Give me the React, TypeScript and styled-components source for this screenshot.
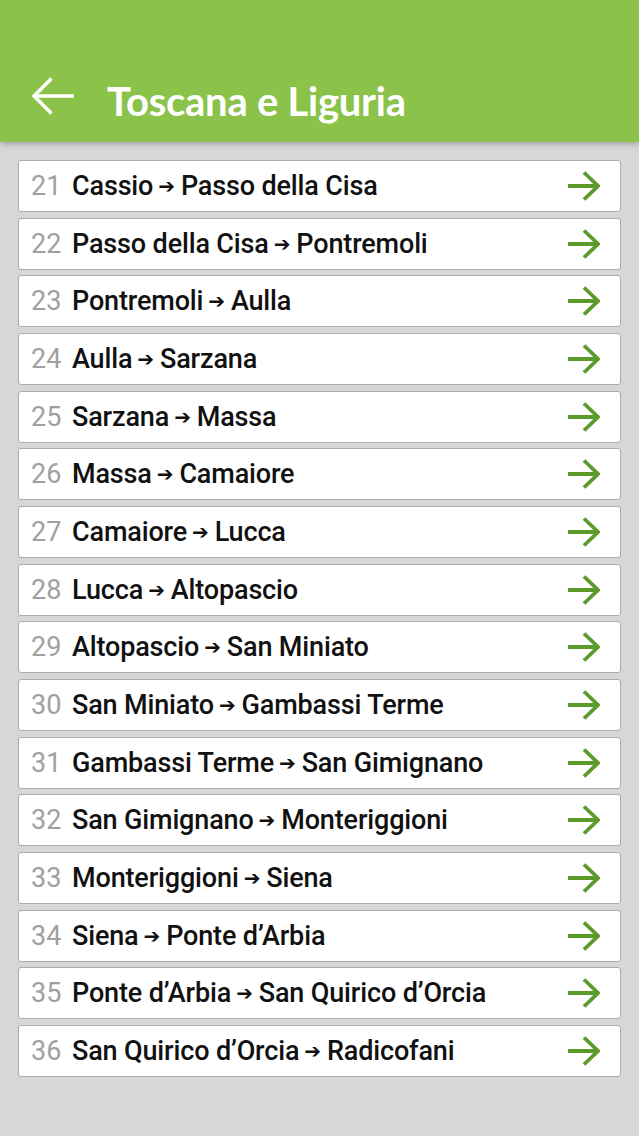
import React from "react";
import styled, { createGlobalStyle } from "styled-components";

const Global = createGlobalStyle`
  html, body { margin: 0; padding: 0; background: #d5d7d9; }
  body { font-family: Roboto, "Noto Sans", sans-serif; }
`;

const Page = styled.div`
  width: 639px;
  min-height: 1136px;
  background: #d5d7d9;
`;

const Header = styled.header`
  height: 142px;
  background: #8bc34a;
  display: flex;
  align-items: flex-end;
  padding: 0 0 21px 32px;
  box-sizing: border-box;
  gap: 32px;
  box-shadow: 0 2px 6px rgba(0, 0, 0, 0.25);
  position: relative;
  z-index: 1;
`;

const BackButton = styled.button`
  border: 0;
  background: transparent;
  padding: 0;
  width: 43px;
  height: 38px;
  margin-bottom: 6px;
  display: flex;
  cursor: pointer;
`;

const Title = styled.h1`
  margin: 0;
  color: #ffffff;
  font-family: Lato, "Open Sans", sans-serif;
  font-weight: 700;
  font-size: 40px;
  letter-spacing: -0.25px;
  line-height: 1;
`;

const List = styled.ul`
  list-style: none;
  margin: 0;
  padding: 18px 18px 0 18px;
  display: flex;
  flex-direction: column;
  gap: 5.67px;
`;

const Card = styled.li`
  height: 52px;
  box-sizing: border-box;
  background: #ffffff;
  border: 1px solid #a9abad;
  border-radius: 3px;
  display: flex;
  align-items: center;
  padding: 0 20px 0 12px;
`;

const Num = styled.span`
  color: #a0a0a0;
  font-size: 27px;
  width: 41px;
  flex: none;
`;

const Route = styled.span`
  flex: 1;
  color: #111111;
  font-size: 27px;
  font-weight: 500;
  letter-spacing: -0.15px;
  white-space: nowrap;
`;

const Sep = styled.span`
  font-family: "DejaVu Sans", sans-serif;
  font-weight: 700;
  font-size: 20px;
  margin: 0 6px 0 5px;
  position: relative;
  top: -2px;
`;

const Go = styled.svg`
  width: 32px;
  height: 30px;
  flex: none;
`;

const stages: [number, string, string][] = [
  [21, "Cassio", "Passo della Cisa"],
  [22, "Passo della Cisa", "Pontremoli"],
  [23, "Pontremoli", "Aulla"],
  [24, "Aulla", "Sarzana"],
  [25, "Sarzana", "Massa"],
  [26, "Massa", "Camaiore"],
  [27, "Camaiore", "Lucca"],
  [28, "Lucca", "Altopascio"],
  [29, "Altopascio", "San Miniato"],
  [30, "San Miniato", "Gambassi Terme"],
  [31, "Gambassi Terme", "San Gimignano"],
  [32, "San Gimignano", "Monteriggioni"],
  [33, "Monteriggioni", "Siena"],
  [34, "Siena", "Ponte d\u2019Arbia"],
  [35, "Ponte d\u2019Arbia", "San Quirico d\u2019Orcia"],
  [36, "San Quirico d\u2019Orcia", "Radicofani"],
];

export default function App() {
  return (
    <Page>
      <Global />
      <Header>
        <BackButton aria-label="Indietro">
          <svg width="43" height="38" viewBox="0 0 43 38">
            <path
              d="M2 19 H42 M19.5 1.5 L2 19 L19.5 36.5"
              fill="none"
              stroke="#ffffff"
              strokeWidth="3.4"
              strokeLinecap="butt"
              strokeLinejoin="miter"
            />
          </svg>
        </BackButton>
        <Title>Toscana e Liguria</Title>
      </Header>
      <List>
        {stages.map(([n, from, to]) => (
          <Card key={n}>
            <Num>{n}</Num>
            <Route>
              {from}
              <Sep>➔</Sep>
              {to}
            </Route>
            <Go viewBox="0 0 32 30">
              <path
                d="M0 15 H30 M16 1.5 L30 15 L16 28.5"
                fill="none"
                stroke="#5c9a2c"
                strokeWidth="3.8"
                strokeLinejoin="miter"
              />
            </Go>
          </Card>
        ))}
      </List>
    </Page>
  );
}
